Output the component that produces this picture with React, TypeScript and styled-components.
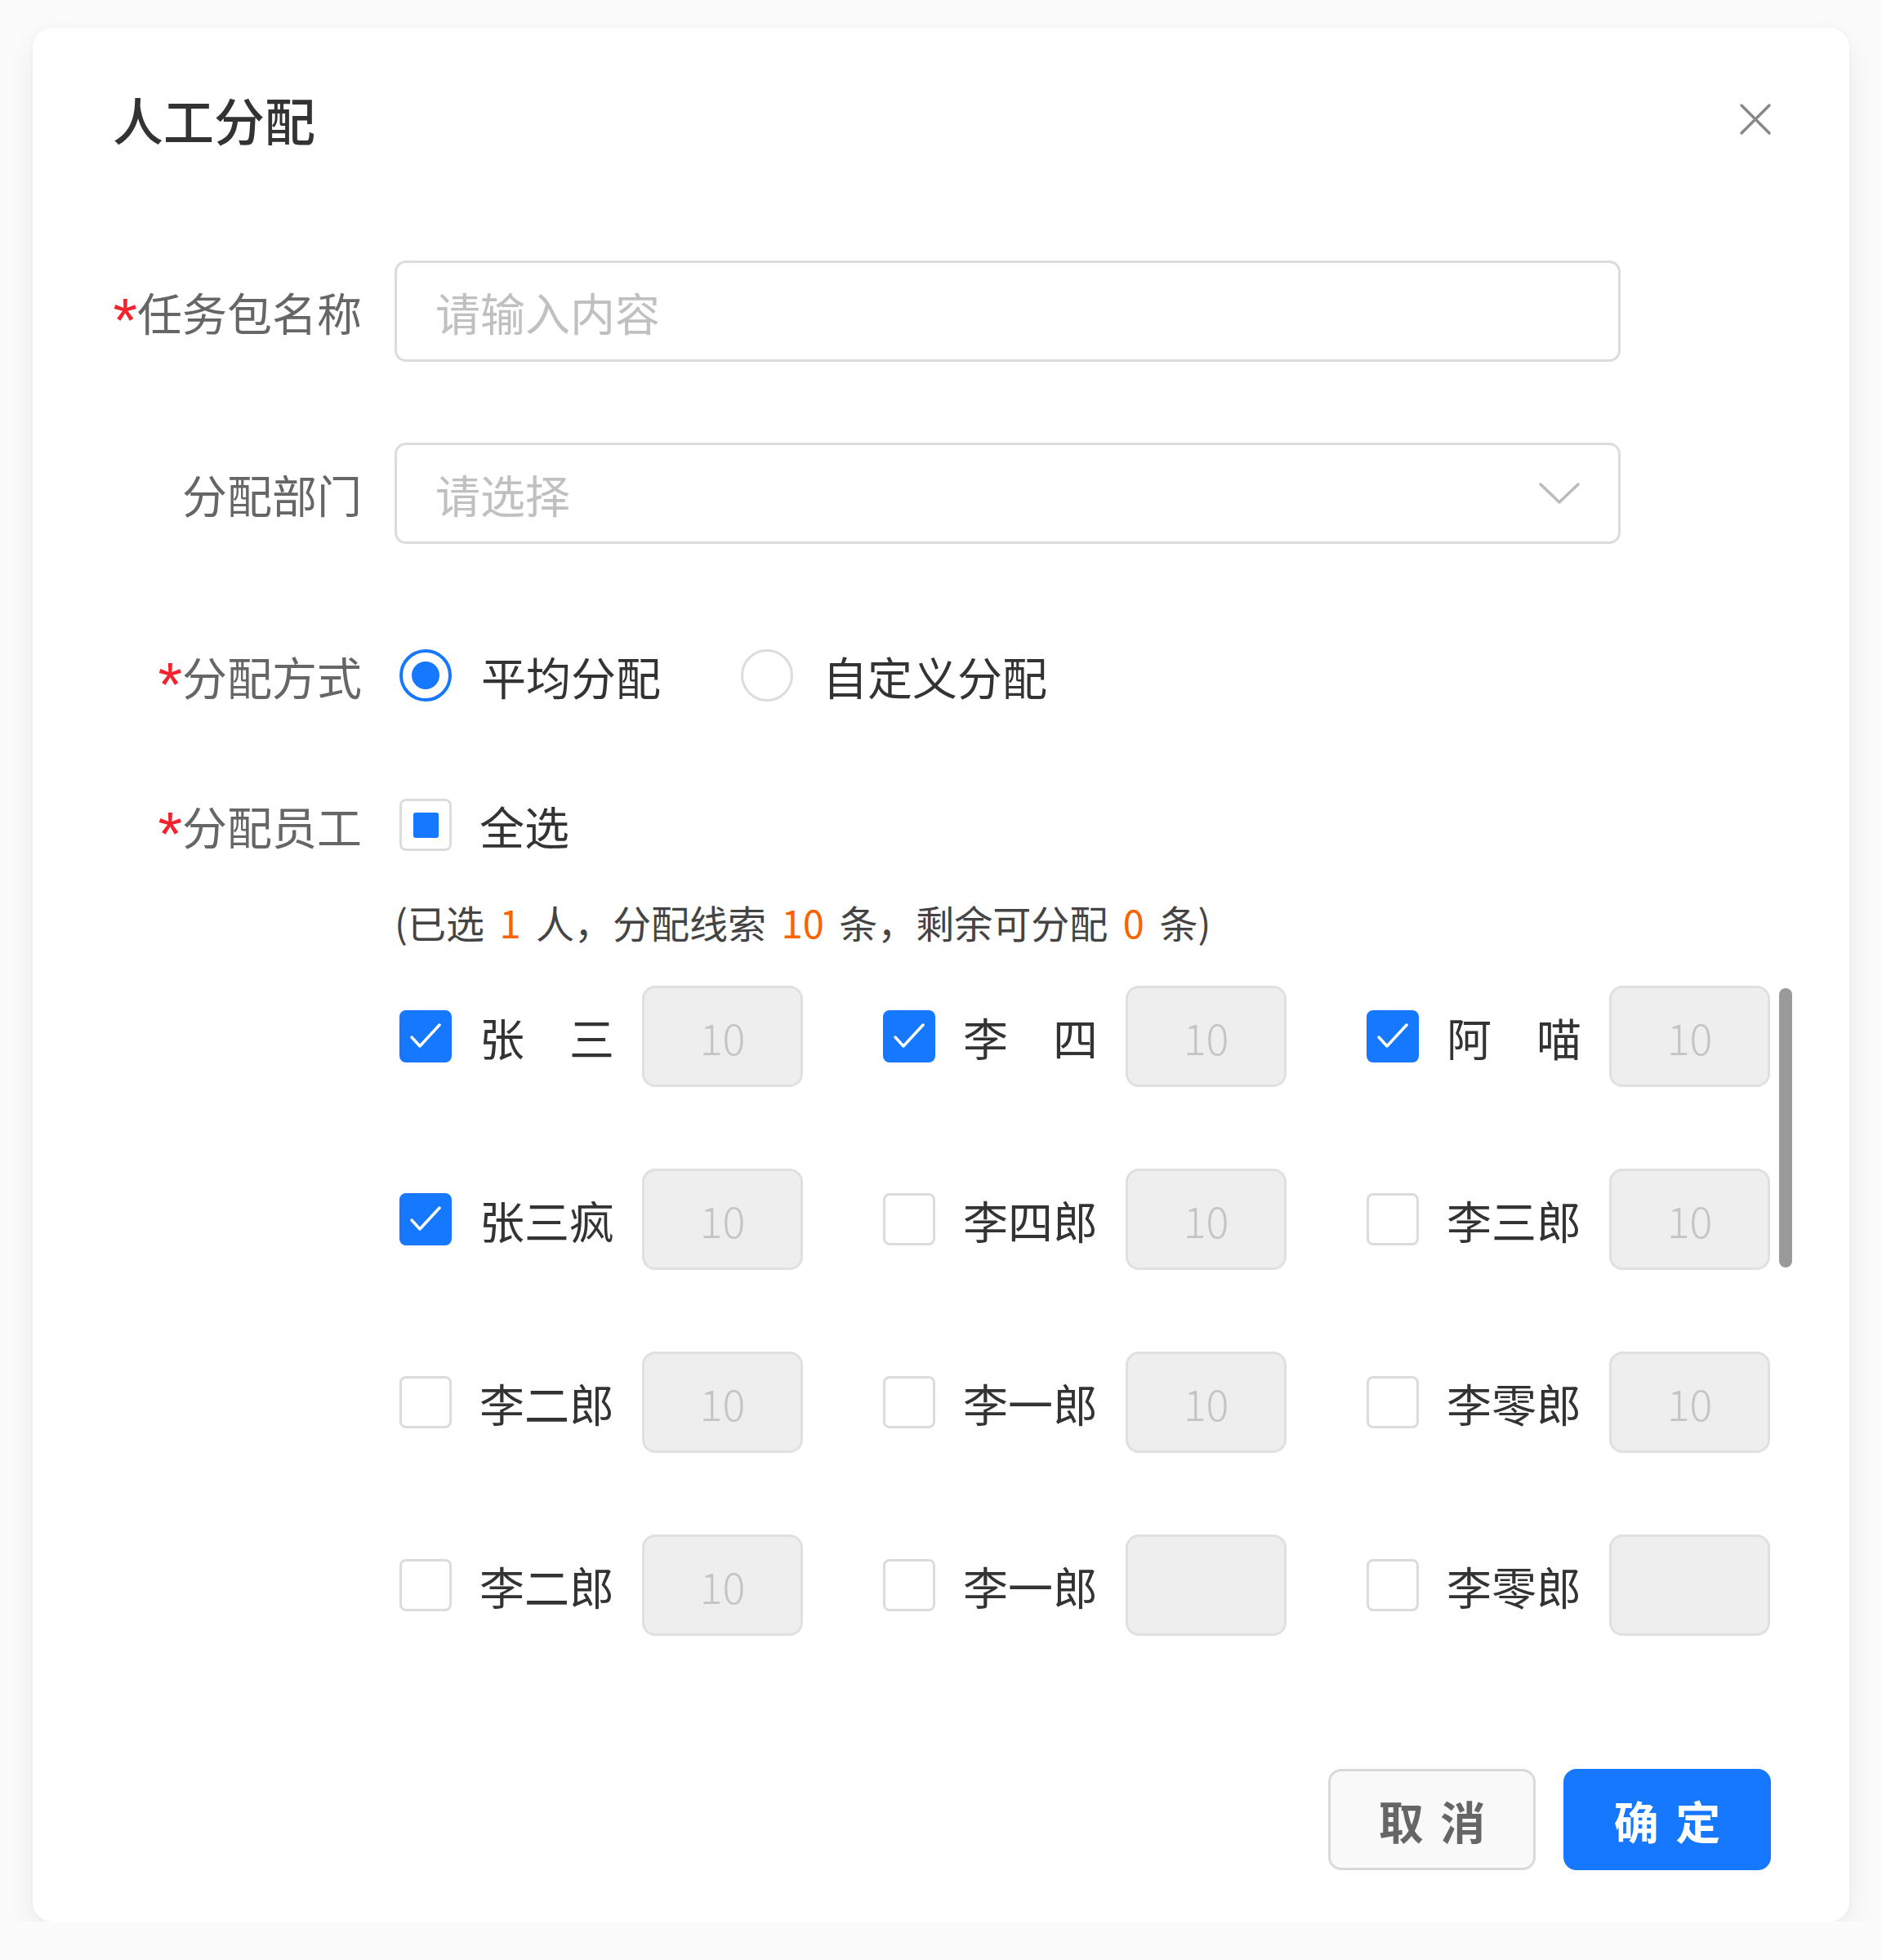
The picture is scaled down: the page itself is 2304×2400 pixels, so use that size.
import styled, { createGlobalStyle } from "styled-components";

const GlobalStyle = createGlobalStyle`
    body {
        margin: 0;
        background: #fbfbfb;
        font-family: "Noto Sans CJK SC", "Noto Sans", sans-serif;
    }
`;

type Employee = {
    name: string;
    checked: boolean;
    count?: number;
};

const employees: Employee[] = [
    { name: "张　三", checked: true, count: 10 },
    { name: "李　四", checked: true, count: 10 },
    { name: "阿　喵", checked: true, count: 10 },
    { name: "张三疯", checked: true, count: 10 },
    { name: "李四郎", checked: false, count: 10 },
    { name: "李三郎", checked: false, count: 10 },
    { name: "李二郎", checked: false, count: 10 },
    { name: "李一郎", checked: false, count: 10 },
    { name: "李零郎", checked: false, count: 10 },
    { name: "李二郎", checked: false, count: 10 },
    { name: "李一郎", checked: false },
    { name: "李零郎", checked: false },
];

const BLUE = "#1677ff";

const Dialog = styled.div`
    box-sizing: border-box;
    margin: 34px 0 0 40px;
    width: 2224px;
    height: 2319px;
    padding: 0 96px 0 98px;
    background: #fff;
    border-radius: 24px;
    box-shadow: 0 14px 40px rgba(0, 0, 0, 0.07), 0 0 6px rgba(0, 0, 0, 0.03);
    display: flex;
    flex-direction: column;
`;

const Header = styled.div`
    height: 224px;
    display: flex;
    align-items: center;
    justify-content: space-between;
`;

const Title = styled.h2`
    margin: 0;
    font-size: 62px;
    line-height: 62px;
    font-weight: 500;
    color: #333;
`;

const CloseButton = styled.button`
    width: 40px;
    height: 40px;
    padding: 0;
    margin-right: -1px;
    border: none;
    background: none;
    display: flex;
    align-items: center;
    justify-content: center;
`;

const Form = styled.div`
    margin-top: 61px;
    display: flex;
    flex-direction: column;
`;

const Row = styled.div<{ $top?: number; $height: number }>`
    margin-top: ${p => p.$top ?? 0}px;
    height: ${p => p.$height}px;
    display: flex;
    align-items: center;
    gap: 40px;
`;

const Label = styled.div`
    width: 305px;
    flex-shrink: 0;
    text-align: right;
    font-size: 55px;
    line-height: 64px;
    color: #666;
    white-space: nowrap;
`;

const Star = styled.span`
    color: #f5222d;
    font-family: "Liberation Sans", sans-serif;
    font-size: 76px;
    line-height: 0;
    vertical-align: -13px;
`;

const TextBox = styled.div`
    box-sizing: border-box;
    width: 1501px;
    height: 124px;
    padding: 0 46px 0 47px;
    border: 3px solid #dcdcdc;
    border-radius: 14px;
    display: flex;
    align-items: center;
    justify-content: space-between;
    font-size: 55px;
    color: #c0c0c0;
`;

const RadioGroup = styled.div`
    display: flex;
    align-items: center;
    padding-left: 6px;
`;

const RadioItem = styled.label`
    display: flex;
    align-items: center;
    gap: 36px;
    margin-right: 98px;
    font-size: 55px;
    color: #333;
`;

const RadioCircle = styled.span<{ $on: boolean }>`
    box-sizing: border-box;
    width: 64px;
    height: 64px;
    border-radius: 50%;
    border: ${p => (p.$on ? `4px solid ${BLUE}` : "3px solid #dcdcdc")};
    display: flex;
    align-items: center;
    justify-content: center;

    &::after {
        content: "";
        display: ${p => (p.$on ? "block" : "none")};
        width: 34px;
        height: 34px;
        border-radius: 50%;
        background: ${BLUE};
    }
`;

const Box = styled.span<{ $on: boolean }>`
    box-sizing: border-box;
    flex-shrink: 0;
    width: 64px;
    height: 64px;
    border-radius: 8px;
    border: 3px solid ${p => (p.$on ? BLUE : "#dcdcdc")};
    background: ${p => (p.$on ? BLUE : "#fff")};
    display: flex;
    align-items: center;
    justify-content: center;
`;

const HalfMark = styled.span`
    width: 31px;
    height: 31px;
    border-radius: 3px;
    background: ${BLUE};
`;

const CheckAll = styled.label`
    display: flex;
    align-items: center;
    gap: 34px;
    padding-left: 6px;
    font-size: 55px;
    color: #333;
`;

const Summary = styled.div`
    margin: 57px 0 0 345px;
    font-size: 47px;
    line-height: 60px;
    word-spacing: 8px;
    color: #444;
`;

const Num = styled.span`
    color: #fa6400;
`;

const GridWrap = styled.div`
    position: relative;
    margin: 48px 0 0 351px;
    width: 1678px;
`;

const Grid = styled.div`
    display: grid;
    grid-template-columns: repeat(3, 494px);
    column-gap: 98px;
    row-gap: 100px;
`;

const Cell = styled.div`
    display: flex;
    align-items: center;
    height: 124px;
`;

const Name = styled.span`
    width: 164px;
    margin: 0 35px 0 34px;
    font-size: 55px;
    color: #333;
    white-space: nowrap;
`;

const CountBox = styled.div`
    box-sizing: border-box;
    width: 197px;
    height: 124px;
    border: 3px solid #e0e0e0;
    border-radius: 16px;
    background: #eeeeee;
    display: flex;
    align-items: center;
    justify-content: center;
    font-size: 52px;
    font-weight: 300;
    color: #c4c4c4;
`;

const ScrollThumb = styled.div`
    position: absolute;
    top: 3px;
    right: -27px;
    width: 16px;
    height: 342px;
    border-radius: 8px;
    background: #9a9a9a;
`;

const Footer = styled.div`
    margin-top: 163px;
    display: flex;
    justify-content: flex-end;
    gap: 34px;
`;

const Button = styled.button<{ $primary?: boolean }>`
    box-sizing: border-box;
    width: 254px;
    height: 124px;
    border-radius: 16px;
    border: 3px solid ${p => (p.$primary ? BLUE : "#d9d9d9")};
    background: ${p => (p.$primary ? BLUE : "#f9f9f9")};
    color: ${p => (p.$primary ? "#fff" : "#666")};
    font-family: inherit;
    font-size: 55px;
    font-weight: 700;
    word-spacing: 8px;
    padding: 0;
`;

function CheckIcon() {
    return (
        <svg width="58" height="58" viewBox="3 3 58 58">
            <path d="M15 33 L25 44 L49 18" fill="none" stroke="#fff" strokeWidth="3.5" strokeLinecap="round" strokeLinejoin="round" />
        </svg>
    );
}

function App() {
    return (
        <>
            <GlobalStyle />
            <Dialog>
                <Header>
                    <Title>人工分配</Title>
                    <CloseButton>
                        <svg width="40" height="40" viewBox="0 0 40 40">
                            <path d="M3 3 L37 37 M37 3 L3 37" stroke="#888" strokeWidth="3.5" strokeLinecap="round" />
                        </svg>
                    </CloseButton>
                </Header>

                <Form>
                    <Row $height={124}>
                        <Label><Star>*</Star>任务包名称</Label>
                        <TextBox>请输入内容</TextBox>
                    </Row>

                    <Row $top={99} $height={124}>
                        <Label>分配部门</Label>
                        <TextBox>
                            请选择
                            <svg width="52" height="30" viewBox="0 0 52 30">
                                <path d="M3 4 L26 26 L49 4" fill="none" stroke="#bbb" strokeWidth="3.5" strokeLinecap="round" strokeLinejoin="round" />
                            </svg>
                        </TextBox>
                    </Row>

                    <Row $top={129} $height={64}>
                        <Label><Star>*</Star>分配方式</Label>
                        <RadioGroup>
                            <RadioItem><RadioCircle $on />平均分配</RadioItem>
                            <RadioItem><RadioCircle $on={false} />自定义分配</RadioItem>
                        </RadioGroup>
                    </Row>

                    <Row $top={119} $height={64}>
                        <Label><Star>*</Star>分配员工</Label>
                        <CheckAll>
                            <Box $on={false}><HalfMark /></Box>
                            全选
                        </CheckAll>
                    </Row>

                    <Summary>
                        (已选 <Num>1</Num> 人，分配线索 <Num>10</Num> 条，剩余可分配 <Num>0</Num> 条)
                    </Summary>

                    <GridWrap>
                        <Grid>
                            {employees.map((e, i) => (
                                <Cell key={i}>
                                    <Box $on={e.checked}>{e.checked && <CheckIcon />}</Box>
                                    <Name>{e.name}</Name>
                                    <CountBox>{e.count ?? ""}</CountBox>
                                </Cell>
                            ))}
                        </Grid>
                        <ScrollThumb />
                    </GridWrap>
                </Form>

                <Footer>
                    <Button>取 消</Button>
                    <Button $primary>确 定</Button>
                </Footer>
            </Dialog>
        </>
    );
}

export default App;
